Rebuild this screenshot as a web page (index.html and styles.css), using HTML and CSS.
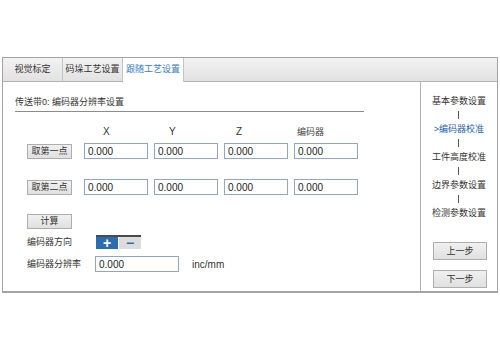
FILE: index.html
```html
<!DOCTYPE html>
<html lang="zh">
<head>
    <meta charset="UTF-8">
    <title>跟随工艺设置</title>
    <link rel="stylesheet" href="styles.css">
</head>
<body>
    <div class="frame">
        <ul class="tabs">
            <li class="tabs__item">视觉标定</li>
            <li class="tabs__item">码垛工艺设置</li>
            <li class="tabs__item tabs__item_active">跟随工艺设置</li>
        </ul>
        <div class="body">
            <main class="main">
                <h1 class="main__title">传送带0: 编码器分辨率设置</h1>
                <div class="points">
                    <span></span>
                    <span class="points__head points__head_x">X</span>
                    <span class="points__head points__head_y">Y</span>
                    <span class="points__head points__head_z">Z</span>
                    <span class="points__head points__head_enc">编码器</span>

                    <div class="points__cell"><button class="btn">取第一点</button></div>
                    <input class="field" value="0.000">
                    <input class="field" value="0.000">
                    <input class="field" value="0.000">
                    <input class="field" value="0.000">

                    <div class="points__cell points__gap"><button class="btn">取第二点</button></div>
                    <input class="field points__gap" value="0.000">
                    <input class="field points__gap" value="0.000">
                    <input class="field points__gap" value="0.000">
                    <input class="field points__gap" value="0.000">
                </div>
                <button class="btn btn_calc">计算</button>
                <div class="row row_dir">
                    <span class="row__label">编码器方向</span>
                    <div class="toggle">
                        <span class="toggle__part toggle__part_on">+</span>
                        <span class="toggle__part">&minus;</span>
                    </div>
                </div>
                <div class="row row_res">
                    <span class="row__label">编码器分辨率</span>
                    <input class="field field_res" value="0.000">
                    <span class="row__unit">inc/mm</span>
                </div>
            </main>
            <aside class="side">
                <ul class="steps">
                    <li class="steps__item">基本参数设置</li>
                    <li class="steps__line"></li>
                    <li class="steps__item steps__item_current">&gt;编码器校准</li>
                    <li class="steps__line"></li>
                    <li class="steps__item">工件高度校准</li>
                    <li class="steps__line"></li>
                    <li class="steps__item">边界参数设置</li>
                    <li class="steps__line"></li>
                    <li class="steps__item">检测参数设置</li>
                </ul>
                <div class="side__nav">
                    <button class="btn btn_nav">上一步</button>
                    <button class="btn btn_nav">下一步</button>
                </div>
            </aside>
        </div>
    </div>
</body>
</html>
```
FILE: styles.css
```css
body {
    margin: 0;
    background: #ffffff;
    font-family: "Liberation Sans", "Noto Sans CJK SC", sans-serif;
    color: #333333;
}

ul {
    list-style-type: none;
    padding: 0;
    margin: 0;
}

.frame {
    margin: 57px 0 0 2px;
    width: 496px;
    height: 236px;
    box-sizing: border-box;
    border: 1px solid #a4a4a4;
    border-bottom-width: 2px;
    display: flex;
    flex-direction: column;
}

.tabs {
    display: flex;
    height: 23px;
    background: linear-gradient(#f2f2f2, #e2e2e2);
    border-bottom: 1px solid #b4b4b4;
}

.tabs__item {
    width: 59px;
    border-right: 1px solid #c4c4c4;
    font-size: 9px;
    line-height: 23px;
    text-align: center;
    color: #333333;
}

.tabs__item_active {
    width: 60px;
    height: 24px;
    background: #ffffff;
    color: #3a7cc4;
}

.body {
    flex: 1;
    display: flex;
}

.main {
    width: 418px;
    border-right: 1px solid #b4b4b4;
    padding: 14px 0 0 12px;
    box-sizing: border-box;
}

.main__title {
    width: 349px;
    margin: 0;
    padding-bottom: 3px;
    border-bottom: 1px solid #8c8c8c;
    font-size: 9px;
    font-weight: 400;
    line-height: 12px;
}

.points {
    display: grid;
    grid-template-columns: 51px 64px 64px 64px 64px;
    column-gap: 6px;
    row-gap: 5px;
    margin: 14px 0 0 12px;
}

.points__head {
    font-size: 10px;
    line-height: 12px;
}

.points__head_x {
    padding-left: 19px;
}

.points__head_y {
    padding-left: 15px;
}

.points__head_z {
    padding-left: 12px;
}

.points__head_enc {
    padding-left: 3px;
    font-size: 9px;
    color: #444444;
}

.points__cell {
    display: flex;
    align-items: center;
}

.btn {
    font-family: inherit;
    font-size: 9px;
    color: #333333;
    background: linear-gradient(#f0f0f0, #e0e0e0);
    border: 1px solid #adadad;
    padding: 0;
    width: 45px;
    height: 15px;
    line-height: 13px;
}

.field {
    font-family: inherit;
    font-size: 10px;
    color: #222222;
    height: 16px;
    box-sizing: border-box;
    border: 1px solid #8fa6c4;
    padding: 0 3px;
    margin: 0;
    outline: none;
}

.points .points__gap {
    margin-top: 15px;
}

.btn_calc {
    display: block;
    margin: 19px 0 0 12px;
}

.row {
    display: flex;
    align-items: center;
    margin-left: 12px;
}

.row_dir {
    margin-top: 6px;
}

.row_res {
    margin-top: 7px;
}

.row__label {
    width: 70px;
    font-size: 9px;
    line-height: 12px;
}

.toggle {
    display: flex;
    border-top: 2px solid #4a4a4a;
    margin-left: -1px;
}

.toggle__part {
    width: 22px;
    height: 12px;
    background: #dcdcdc;
    color: #2c6cb0;
    font-size: 14px;
    font-weight: 700;
    line-height: 12px;
    text-align: center;
}

.toggle__part_on {
    background: #2c6cb0;
    color: #ffffff;
    margin-right: 1px;
}

.field_res {
    width: 84px;
    margin-left: -2px;
}

.row__unit {
    margin-left: 13px;
    font-size: 10px;
}

.side {
    flex: 1;
    display: flex;
    flex-direction: column;
    align-items: center;
    padding: 13px 0 3px;
}

.steps {
    display: flex;
    flex-direction: column;
    align-items: center;
}

.steps__item {
    font-size: 9px;
    line-height: 12px;
}

.steps__item_current {
    color: #1f5fa8;
}

.steps__line {
    width: 1px;
    height: 8px;
    margin: 4px 0;
    background: #555555;
}

.side__nav {
    margin-top: auto;
    display: flex;
    flex-direction: column;
    gap: 10px;
    padding-left: 2px;
}

.btn_nav {
    width: 54px;
    height: 18px;
    line-height: 16px;
}
```
